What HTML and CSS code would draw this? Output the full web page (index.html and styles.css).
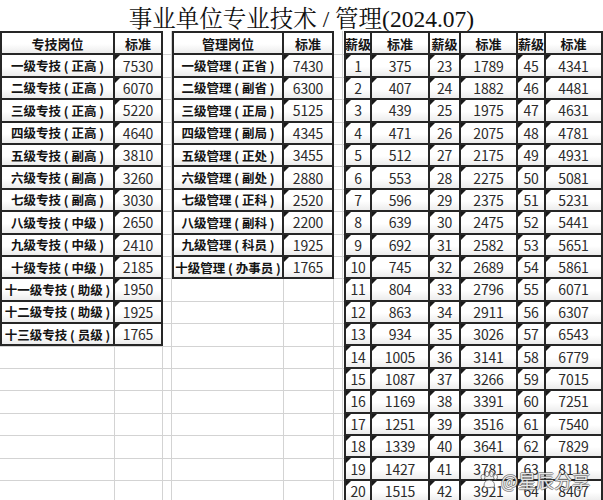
FILE: index.html
```html
<!DOCTYPE html>
<html lang="zh-CN">
<head>
<meta charset="utf-8">
<title>事业单位专业技术 / 管理(2024.07)</title>
<link rel="stylesheet" href="styles.css">
</head>
<body>
<h1 class="title">事业单位专业技术 / 管理(2024.07)</h1>
<div class="sheet">
  <div class="t t1">
    <div class="c h">专技岗位</div><div class="c h">标准</div>
    <div class="c b">一级专技 ( 正高 )</div><div class="c n">7530</div>
    <div class="c b">二级专技 ( 正高 )</div><div class="c n">6070</div>
    <div class="c b">三级专技 ( 正高 )</div><div class="c n">5220</div>
    <div class="c b">四级专技 ( 正高 )</div><div class="c n">4640</div>
    <div class="c b">五级专技 ( 副高 )</div><div class="c n">3810</div>
    <div class="c b">六级专技 ( 副高 )</div><div class="c n">3260</div>
    <div class="c b">七级专技 ( 副高 )</div><div class="c n">3030</div>
    <div class="c b">八级专技 ( 中级 )</div><div class="c n">2650</div>
    <div class="c b">九级专技 ( 中级 )</div><div class="c n">2410</div>
    <div class="c b">十级专技 ( 中级 )</div><div class="c n">2185</div>
    <div class="c b">十一级专技 ( 助级 )</div><div class="c n">1950</div>
    <div class="c b">十二级专技 ( 助级 )</div><div class="c n">1925</div>
    <div class="c b">十三级专技 ( 员级 )</div><div class="c n">1765</div>
  </div>
  <div class="t t2">
    <div class="c h">管理岗位</div><div class="c h">标准</div>
    <div class="c b">一级管理 ( 正省 )</div><div class="c n">7430</div>
    <div class="c b">二级管理 ( 副省 )</div><div class="c n">6300</div>
    <div class="c b">三级管理 ( 正局 )</div><div class="c n">5125</div>
    <div class="c b">四级管理 ( 副局 )</div><div class="c n">4345</div>
    <div class="c b">五级管理 ( 正处 )</div><div class="c n">3455</div>
    <div class="c b">六级管理 ( 副处 )</div><div class="c n">2880</div>
    <div class="c b">七级管理 ( 正科 )</div><div class="c n">2520</div>
    <div class="c b">八级管理 ( 副科 )</div><div class="c n">2200</div>
    <div class="c b">九级管理 ( 科员 )</div><div class="c n">1925</div>
    <div class="c b">十级管理 ( 办事员 )</div><div class="c n">1765</div>
  </div>
  <div class="t t3">
    <div class="c h">薪级</div><div class="c h">标准</div><div class="c h">薪级</div><div class="c h">标准</div><div class="c h">薪级</div><div class="c h">标准</div>
    <div class="c n">1</div><div class="c n">375</div><div class="c n">23</div><div class="c n">1789</div><div class="c n">45</div><div class="c n">4341</div>
    <div class="c n">2</div><div class="c n">407</div><div class="c n">24</div><div class="c n">1882</div><div class="c n">46</div><div class="c n">4481</div>
    <div class="c n">3</div><div class="c n">439</div><div class="c n">25</div><div class="c n">1975</div><div class="c n">47</div><div class="c n">4631</div>
    <div class="c n">4</div><div class="c n">471</div><div class="c n">26</div><div class="c n">2075</div><div class="c n">48</div><div class="c n">4781</div>
    <div class="c n">5</div><div class="c n">512</div><div class="c n">27</div><div class="c n">2175</div><div class="c n">49</div><div class="c n">4931</div>
    <div class="c n">6</div><div class="c n">553</div><div class="c n">28</div><div class="c n">2275</div><div class="c n">50</div><div class="c n">5081</div>
    <div class="c n">7</div><div class="c n">596</div><div class="c n">29</div><div class="c n">2375</div><div class="c n">51</div><div class="c n">5231</div>
    <div class="c n">8</div><div class="c n">639</div><div class="c n">30</div><div class="c n">2475</div><div class="c n">52</div><div class="c n">5441</div>
    <div class="c n">9</div><div class="c n">692</div><div class="c n">31</div><div class="c n">2582</div><div class="c n">53</div><div class="c n">5651</div>
    <div class="c n">10</div><div class="c n">745</div><div class="c n">32</div><div class="c n">2689</div><div class="c n">54</div><div class="c n">5861</div>
    <div class="c n">11</div><div class="c n">804</div><div class="c n">33</div><div class="c n">2796</div><div class="c n">55</div><div class="c n">6071</div>
    <div class="c n">12</div><div class="c n">863</div><div class="c n">34</div><div class="c n">2911</div><div class="c n">56</div><div class="c n">6307</div>
    <div class="c n">13</div><div class="c n">934</div><div class="c n">35</div><div class="c n">3026</div><div class="c n">57</div><div class="c n">6543</div>
    <div class="c n">14</div><div class="c n">1005</div><div class="c n">36</div><div class="c n">3141</div><div class="c n">58</div><div class="c n">6779</div>
    <div class="c n">15</div><div class="c n">1087</div><div class="c n">37</div><div class="c n">3266</div><div class="c n">59</div><div class="c n">7015</div>
    <div class="c n">16</div><div class="c n">1169</div><div class="c n">38</div><div class="c n">3391</div><div class="c n">60</div><div class="c n">7251</div>
    <div class="c n">17</div><div class="c n">1251</div><div class="c n">39</div><div class="c n">3516</div><div class="c n">61</div><div class="c n">7540</div>
    <div class="c n">18</div><div class="c n">1339</div><div class="c n">40</div><div class="c n">3641</div><div class="c n">62</div><div class="c n">7829</div>
    <div class="c n">19</div><div class="c n">1427</div><div class="c n">41</div><div class="c n">3781</div><div class="c n">63</div><div class="c n">8118</div>
    <div class="c n">20</div><div class="c n">1515</div><div class="c n">42</div><div class="c n">3921</div><div class="c n">64</div><div class="c n">8407</div>
  </div>
</div>
<div class="wm">
  <svg class="paw" viewBox="0 0 20 18" width="20" height="18" aria-hidden="true">
    <ellipse cx="4" cy="6" rx="2" ry="2.6"/>
    <ellipse cx="8" cy="3" rx="2" ry="2.6"/>
    <ellipse cx="12.5" cy="3" rx="2" ry="2.6"/>
    <ellipse cx="16.5" cy="6" rx="2" ry="2.6"/>
    <path d="M5 15 Q5 9 10.2 9 Q15.5 9 15.5 15 Q15.5 17 10.2 16.5 Q5 17 5 15 Z"/>
  </svg>
  <span class="wm-text">@星辰分享</span>
</div>
</body>
</html>
```
FILE: styles.css
```css
html, body {
  margin: 0;
  padding: 0;
  background: #fff;
}
body {
  width: 603px;
  height: 500px;
  overflow: hidden;
  position: relative;
  font-family: "Noto Sans CJK SC", sans-serif;
}
.title {
  margin: 0;
  height: 31px;
  text-align: center;
  font-family: "Liberation Serif", "Noto Serif CJK SC", "Noto Sans CJK SC", serif;
  font-weight: 400;
  font-size: 23.5px;
  line-height: 39px;
  color: #111;
}
.sheet {
  display: flex;
  align-items: flex-start;
  height: 472px;
  background-image:
    linear-gradient(90deg,
      transparent 114px, #d3d3d3 114px 115px,
      transparent 115px 162px, #d3d3d3 162px 163px,
      transparent 163px 171px, #d3d3d3 171px 172px,
      transparent 172px 283px, #d3d3d3 283px 284px,
      transparent 284px 333px, #d3d3d3 333px 334px,
      transparent 334px 342px, #d3d3d3 342px 343px,
      transparent 343px),
    repeating-linear-gradient(180deg, transparent 0 21.4px, #d3d3d3 21.4px 22.4px);
  background-position: 0 0, 0 2px;
}
.t {
  display: grid;
  grid-auto-rows: 22.4px;
  border-top: 2px solid #262626;
  border-left: 2px solid #262626;
  background: #fff;
}
.t1 {
  grid-template-columns: 113px 48px;
  margin-right: 9px;
}
.t2 {
  grid-template-columns: 110px 50px;
  margin-right: 10px;
}
.t3 {
  grid-template-columns: 26px 58px 31px 57px 28px 57px;
}
.c {
  position: relative;
  box-sizing: border-box;
  border-right: 2px solid #262626;
  border-bottom: 2px solid #262626;
  display: flex;
  align-items: center;
  justify-content: center;
  white-space: nowrap;
  background: linear-gradient(#fff 0 55%, #ececec 100%);
  font-size: 14px;
  color: #2b2b2b;
  letter-spacing: -0.2px;
}
.h {
  font-weight: 700;
  font-size: 13px;
  color: #141414;
  letter-spacing: 0;
}
.b {
  font-weight: 700;
  font-size: 12.5px;
  color: #141414;
  letter-spacing: 0;
}
.n::before {
  content: "";
  position: absolute;
  left: 0;
  top: 0;
  border-top: 5px solid #1a1a1a;
  border-right: 5px solid transparent;
}
.wm {
  position: absolute;
  left: 479px;
  top: 467px;
  display: flex;
  align-items: center;
  gap: 2px;
}
.paw {
  fill: rgba(250, 250, 250, 0.85);
  stroke: rgba(80, 80, 80, 0.75);
  stroke-width: 0.9;
}
.wm-text {
  font-size: 18px;
  color: rgba(250, 250, 250, 0.9);
  text-shadow:
    1px 0 0 rgba(70, 70, 70, 0.55),
    -1px 0 0 rgba(70, 70, 70, 0.55),
    0 1px 0 rgba(70, 70, 70, 0.55),
    0 -1px 0 rgba(70, 70, 70, 0.55);
}
```
